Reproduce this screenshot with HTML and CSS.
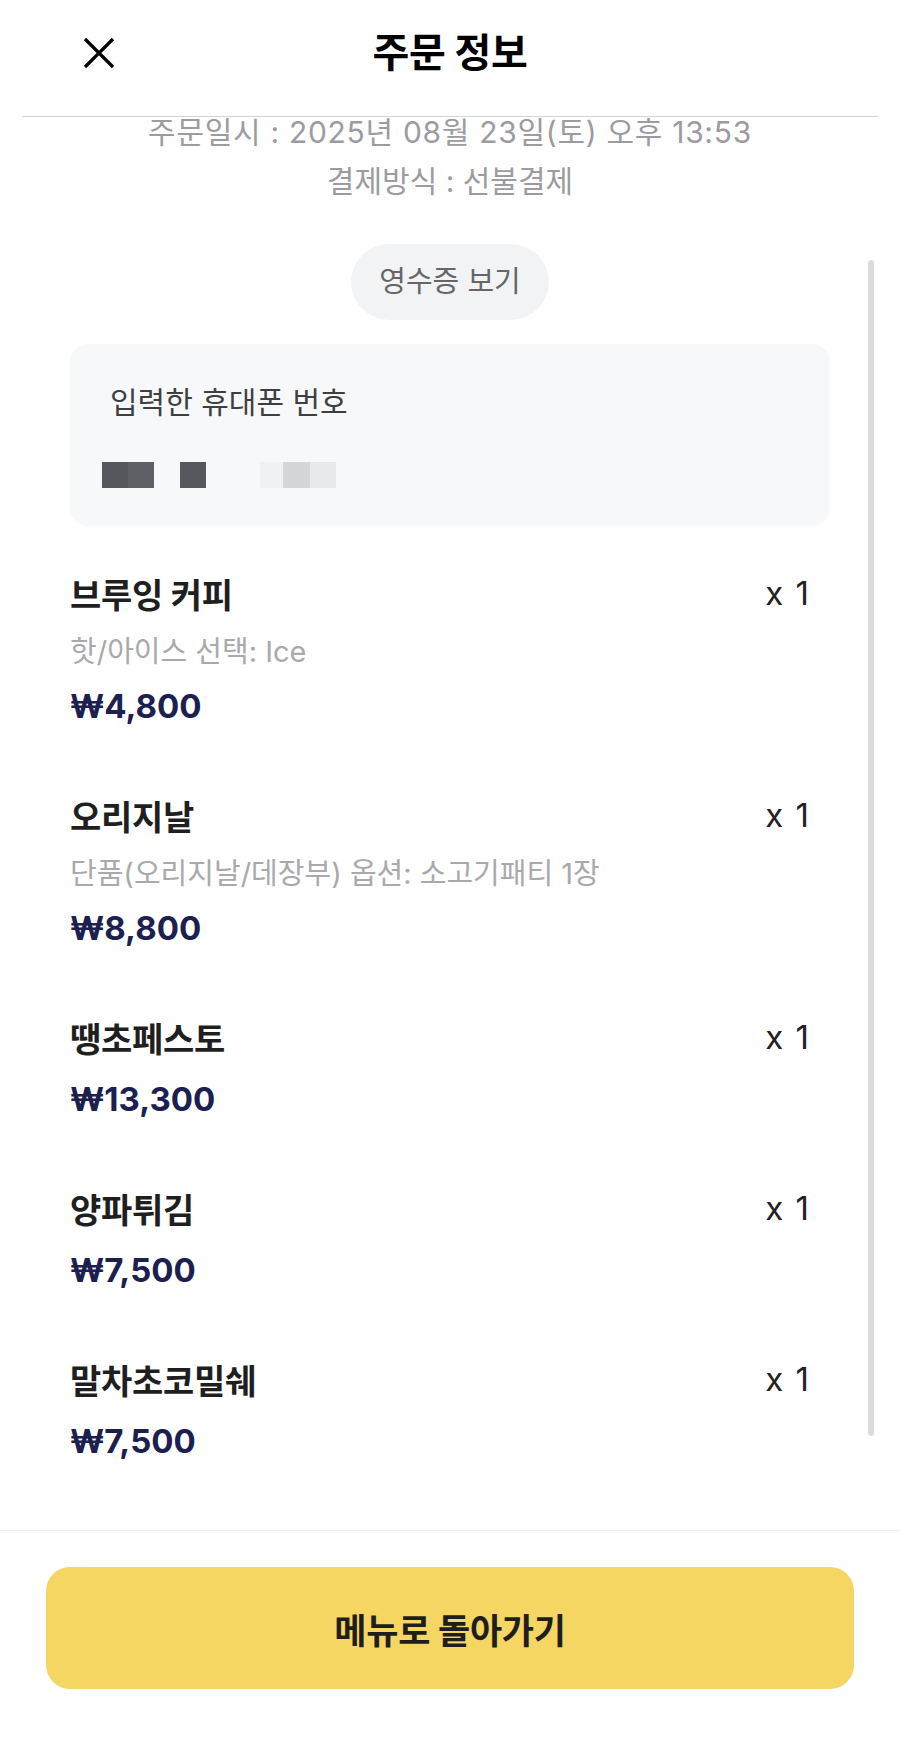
FILE: index.html
```html
<!DOCTYPE html>
<html lang="ko">
<head>
<meta charset="utf-8">
<title>주문 정보</title>
<link rel="stylesheet" href="styles.css">
</head>
<body>
<div class="app">
  <header class="header">
    <div class="header-left">
      <svg class="close-icon" width="32" height="32" viewBox="0 0 32 32" aria-label="닫기">
        <path d="M2 2 L30 30 M30 2 L2 30" stroke="#000" stroke-width="3.2" fill="none"/>
      </svg>
    </div>
    <h1 class="title">주문 정보</h1>
    <div class="header-right"></div>
  </header>

  <main class="main">
    <div class="content">
      <div class="meta">
        <p class="meta-line meta-date">주문일시 : 2025년 08월 23일(토) 오후 13:53</p>
        <p class="meta-line meta-second">결제방식 : 선불결제</p>
      </div>

      <div class="pill-wrap">
        <button class="pill">영수증 보기</button>
      </div>

      <section class="phone-card">
        <p class="phone-label">입력한 휴대폰 번호</p>
        <div class="mask-row">
          <span class="mask-group">
            <span class="px d1"></span><span class="px d2"></span>
          </span>
          <span class="mask-group">
            <span class="px d3"></span>
          </span>
          <span class="mask-group">
            <span class="px l1"></span><span class="px l2"></span><span class="px l3"></span>
          </span>
        </div>
      </section>

      <ul class="items">
        <li class="item">
          <div class="item-row"><span class="item-name">브루잉 커피</span><span class="item-qty">x 1</span></div>
          <p class="item-opt">핫/아이스 선택: Ice</p>
          <p class="item-price">₩4,800</p>
        </li>
        <li class="item">
          <div class="item-row"><span class="item-name">오리지날</span><span class="item-qty">x 1</span></div>
          <p class="item-opt">단품(오리지날/데장부) 옵션: 소고기패티 1장</p>
          <p class="item-price">₩8,800</p>
        </li>
        <li class="item">
          <div class="item-row"><span class="item-name">땡초페스토</span><span class="item-qty">x 1</span></div>
          <p class="item-price">₩13,300</p>
        </li>
        <li class="item">
          <div class="item-row"><span class="item-name">양파튀김</span><span class="item-qty">x 1</span></div>
          <p class="item-price">₩7,500</p>
        </li>
        <li class="item">
          <div class="item-row"><span class="item-name">말차초코밀쉐</span><span class="item-qty">x 1</span></div>
          <p class="item-price">₩7,500</p>
        </li>
      </ul>
    </div>
    <div class="scrollbar"></div>
  </main>

  <footer class="footer">
    <button class="back-btn">메뉴로 돌아가기</button>
  </footer>
</div>
</body>
</html>
```

FILE: styles.css
```css
* {
  box-sizing: border-box;
}

html, body {
  margin: 0;
  padding: 0;
  background: #ffffff;
}

body {
  font-family: "Inter", "Noto Sans CJK KR", sans-serif;
  color: #1f1f1f;
}

p, h1, ul {
  margin: 0;
  padding: 0;
}

button {
  font-family: inherit;
  border: none;
  cursor: pointer;
}

.app {
  width: 900px;
  height: 1755px;
  display: flex;
  flex-direction: column;
  overflow: hidden;
}

/* Header */
.header {
  flex: none;
  height: 117px;
  margin: 0 22px;
  padding-bottom: 11px;
  border-bottom: 1px solid #d4d4d6;
  display: grid;
  grid-template-columns: 1fr auto 1fr;
  align-items: center;
}

.header-left {
  padding-left: 61px;
  display: flex;
  align-items: center;
}

.close-icon {
  display: block;
}

.title {
  font-size: 40px;
  font-weight: 700;
  color: #000;
  line-height: 48px;
  letter-spacing: -0.3px;
}

/* Main scroll area */
.main {
  flex: 1;
  min-height: 0;
  position: relative;
}

.content {
  padding: 0 70px;
}

.scrollbar {
  position: absolute;
  right: 26px;
  top: 143px;
  width: 6px;
  height: 1176px;
  border-radius: 3px;
  background: #dcdcdd;
}

.meta {
  text-align: center;
  color: #9b9ba0;
  font-size: 30px;
}

.meta-line {
  line-height: 30px;
}

.meta-date {
  letter-spacing: 0.7px;
}

.meta-second {
  margin-top: 19px;
}

.pill-wrap {
  margin-top: 48px;
  display: flex;
  justify-content: center;
}

.pill {
  height: 76px;
  padding: 0 28px;
  border-radius: 38px;
  background: #f2f3f5;
  color: #666669;
  font-size: 29px;
  line-height: 76px;
}

/* Phone card */
.phone-card {
  margin-top: 24px;
  background: #f7f8fa;
  border-radius: 18px;
  padding: 40px 40px 38px;
}

.phone-label {
  font-size: 30px;
  line-height: 36px;
  color: #3f3f42;
}

.mask-row {
  margin-top: 42px;
  margin-left: -8px;
  display: flex;
  gap: 26px;
  height: 26px;
}

.mask-group {
  display: flex;
}

.mask-group + .mask-group + .mask-group {
  margin-left: 28px;
}

.px {
  display: block;
  width: 26px;
  height: 26px;
}

.d1 { background: #55575c; }
.d2 { background: #5f6065; }
.d3 { background: #55585d; }
.l1 { background: #f0f1f3; width: 23px; }
.l2 { background: #d5d6d8; width: 27px; }
.l3 { background: #e8e9eb; }

/* Items */
.items {
  list-style: none;
  margin-top: 47px;
  display: flex;
  flex-direction: column;
  gap: 69px;
  padding-right: 21px;
}

.item-row {
  height: 40px;
  display: flex;
  justify-content: space-between;
  align-items: center;
}

.item-name {
  font-size: 34px;
  font-weight: 700;
  color: #1f1f1f;
  letter-spacing: -0.3px;
}

.item-qty {
  font-size: 33px;
  color: #222;
  word-spacing: 3px;
}

.item-opt {
  margin-top: 21px;
  font-size: 29px;
  line-height: 36px;
  color: #a9a9ab;
}

.item-price {
  margin-top: 22px;
  font-size: 33px;
  line-height: 40px;
  font-weight: 700;
  color: #1c204f;
  letter-spacing: 0;
}

.item-opt + .item-price {
  margin-top: 16px;
}

/* Footer */
.footer {
  flex: none;
  height: 225px;
  border-top: 1px solid #f0f0f1;
  padding: 36px 46px 0;
}

.back-btn {
  width: 100%;
  height: 122px;
  border-radius: 24px;
  background: #f6d662;
  color: #1e1e1e;
  font-size: 35px;
  font-weight: 700;
  letter-spacing: -0.3px;
}
```
